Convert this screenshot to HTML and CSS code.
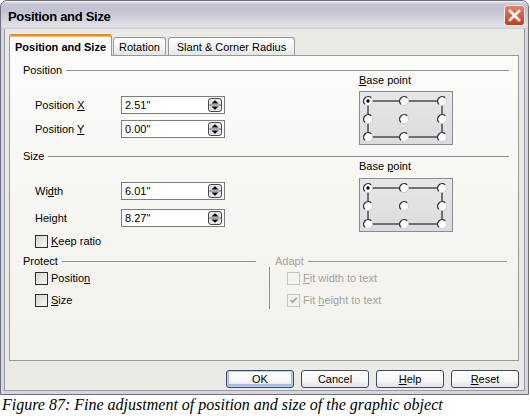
FILE: index.html
```html
<!DOCTYPE html>
<html>
<head>
<meta charset="utf-8">
<link rel="stylesheet" href="styles.css">
</head>
<body>
<svg class="defs" width="0" height="0">
  <defs>
    <g id="rb">
      <circle cx="0" cy="0" r="4.5" fill="#ffffff" stroke="#c8c8cc" stroke-width="0.8"/>
      <path d="M-3.18 3.18 A4.5 4.5 0 0 1 3.18 -3.18" fill="none" stroke="#333333" stroke-width="1.4"/>
    </g>
  </defs>
</svg>
<div class="window">
  <div class="titlebar">
    <span class="title">Position and Size</span>
    <span class="close">
      <svg width="21" height="21" viewBox="0 0 21 21">
        <defs>
          <linearGradient id="cg" x1="0" y1="0" x2="0" y2="1">
            <stop offset="0" stop-color="#e98468"/>
            <stop offset="1" stop-color="#c23a1c"/>
          </linearGradient>
        </defs>
        <rect x="0.5" y="0.5" width="20" height="20" rx="3" fill="url(#cg)" stroke="#f4f0f0"/>
        <path d="M6 6 L15 15 M15 6 L6 15" stroke="#ffffff" stroke-width="2.6" stroke-linecap="square"/>
      </svg>
    </span>
  </div>
  <div class="body">
    <div class="tabs">
      <div class="tab active">Position and Size</div>
      <div class="tab rot">Rotation</div>
      <div class="tab slant">Slant &amp; Corner Radius</div>
    </div>
    <div class="panel">
      <div class="head"><span>Position</span></div>
      <div class="sec">
        <div class="fields">
          <div class="field"><span class="lbl">Position <u>X</u></span><div class="input"><span>2.51"</span><svg class="spin" width="14" height="14" viewBox="0 0 14 14"><rect x="0.5" y="0.5" width="13" height="13" rx="2.5" fill="#e6e6ea" stroke="#4a4a4a"/><line x1="1" y1="7" x2="13" y2="7" stroke="#6a6a6a"/><path d="M7 2.3 L10.6 5.6 H3.4Z" fill="#000"/><path d="M3.4 8.4 H10.6 L7 11.7Z" fill="#000"/></svg></div></div>
          <div class="field gap6"><span class="lbl">Position <u>Y</u></span><div class="input"><span>0.00"</span><svg class="spin" width="14" height="14" viewBox="0 0 14 14"><rect x="0.5" y="0.5" width="13" height="13" rx="2.5" fill="#e6e6ea" stroke="#4a4a4a"/><line x1="1" y1="7" x2="13" y2="7" stroke="#6a6a6a"/><path d="M7 2.3 L10.6 5.6 H3.4Z" fill="#000"/><path d="M3.4 8.4 H10.6 L7 11.7Z" fill="#000"/></svg></div></div>
        </div>
        <div class="base">
          <div class="blbl"><u>B</u>ase point</div>
          <div class="bbox">
            <svg width="92" height="52" viewBox="0 0 92 52">
              <path d="M8 9 H82 V45 H8 Z" fill="none" stroke="#000" stroke-width="1"/>
              <use href="#rb" x="8" y="9"/><use href="#rb" x="44" y="9"/><use href="#rb" x="82" y="9"/>
              <use href="#rb" x="8" y="27"/><use href="#rb" x="44" y="27"/><use href="#rb" x="82" y="27"/>
              <use href="#rb" x="8" y="45"/><use href="#rb" x="44" y="45"/><use href="#rb" x="82" y="45"/>
              <circle cx="8" cy="9" r="1.7" fill="#000"/>
            </svg>
          </div>
        </div>
      </div>
      <div class="head size-head"><span>Size</span></div>
      <div class="sec">
        <div class="fields">
          <div class="field"><span class="lbl">Wi<u>d</u>th</span><div class="input"><span>6.01"</span><svg class="spin" width="14" height="14" viewBox="0 0 14 14"><rect x="0.5" y="0.5" width="13" height="13" rx="2.5" fill="#e6e6ea" stroke="#4a4a4a"/><line x1="1" y1="7" x2="13" y2="7" stroke="#6a6a6a"/><path d="M7 2.3 L10.6 5.6 H3.4Z" fill="#000"/><path d="M3.4 8.4 H10.6 L7 11.7Z" fill="#000"/></svg></div></div>
          <div class="field gap9"><span class="lbl">Hei<u>g</u>ht</span><div class="input"><span>8.27"</span><svg class="spin" width="14" height="14" viewBox="0 0 14 14"><rect x="0.5" y="0.5" width="13" height="13" rx="2.5" fill="#e6e6ea" stroke="#4a4a4a"/><line x1="1" y1="7" x2="13" y2="7" stroke="#6a6a6a"/><path d="M7 2.3 L10.6 5.6 H3.4Z" fill="#000"/><path d="M3.4 8.4 H10.6 L7 11.7Z" fill="#000"/></svg></div></div>
          <div class="check keep"><span class="cb"></span><span><u>K</u>eep ratio</span></div>
        </div>
        <div class="base">
          <div class="blbl">Base <u>p</u>oint</div>
          <div class="bbox b2">
            <svg width="92" height="52" viewBox="0 0 92 52">
              <path d="M8 9 H82 V45 H8 Z" fill="none" stroke="#000" stroke-width="1"/>
              <use href="#rb" x="8" y="9"/><use href="#rb" x="44" y="9"/><use href="#rb" x="82" y="9"/>
              <use href="#rb" x="8" y="27"/><use href="#rb" x="44" y="27"/><use href="#rb" x="82" y="27"/>
              <use href="#rb" x="8" y="45"/><use href="#rb" x="44" y="45"/><use href="#rb" x="82" y="45"/>
              <circle cx="8" cy="9" r="1.7" fill="#000"/>
            </svg>
          </div>
        </div>
      </div>
      <div class="bottom">
        <div class="col protect">
          <div class="head"><span>Protect</span></div>
          <div class="check first"><span class="cb"></span><span>Positio<u>n</u></span></div>
          <div class="check second"><span class="cb"></span><span><u>S</u>ize</span></div>
        </div>
        <div class="vsep"></div>
        <div class="col adapt">
          <div class="head dis"><span>Adapt</span></div>
          <div class="check first dis"><span class="cb"></span><span><u>F</u>it width to text</span></div>
          <div class="check second dis"><span class="cb"><svg width="11" height="11" viewBox="0 0 11 11"><path d="M2.5 5 L4.5 7.2 L8.8 2.8" fill="none" stroke="#a9a9a2" stroke-width="1.8"/></svg></span><span>Fit <u>h</u>eight to text</span></div>
        </div>
      </div>
    </div>
    <div class="buttons">
      <div class="btn default">OK</div>
      <div class="btn">Cancel</div>
      <div class="btn"><u>H</u>elp</div>
      <div class="btn"><u>R</u>eset</div>
    </div>
  </div>
</div>
<p class="caption">Figure 87: Fine adjustment of position and size of the graphic object</p>
</body>
</html>
```

FILE: styles.css
```css
html, body {
  margin: 0;
  padding: 0;
  background: #ffffff;
}

body {
  font-family: "Liberation Sans", Arial, sans-serif;
  font-size: 11px;
  color: #000;
  width: 530px;
  height: 420px;
  overflow: hidden;
}

.defs {
  position: absolute;
  width: 0;
  height: 0;
}

u {
  text-decoration: underline;
  text-underline-offset: 1px;
}

.window {
  width: 529px;
  height: 395px;
  box-sizing: border-box;
  border: 1px solid #6f6f7d;
  border-radius: 7px 7px 0 0;
  background: #ebeae4;
  box-shadow: inset 3px 0 0 #d6d6de, inset -3px 0 0 #d6d6de, inset 0 -3px 0 #d6d6de, inset 4px 0 0 #9a9aa8, inset -4px 0 0 #9a9aa8, inset 0 -4px 0 #9a9aa8;
  display: flex;
  flex-direction: column;
  overflow: hidden;
}

.titlebar {
  height: 28px;
  flex: none;
  display: flex;
  align-items: center;
  justify-content: space-between;
  padding: 0 3px 0 7px;
  background: linear-gradient(to bottom, #f4f4f8 0px, #c4c4d4 3px, #c2c2d3 9px, #d2d2de 18px, #e2e2ea 25px, #cbcbd6 28px);
  border-radius: 6px 6px 0 0;
}

.title {
  font-weight: bold;
  font-size: 13px;
  letter-spacing: -0.3px;
  padding-top: 2px;
}

.close {
  display: flex;
  margin-top: 1px;
}

.body {
  flex: 1;
  padding: 5px 9px 0 8px;
  display: flex;
  flex-direction: column;
}

.tabs {
  height: 21px;
  display: flex;
  align-items: flex-end;
  position: relative;
  z-index: 1;
}

.tab {
  box-sizing: border-box;
  height: 18px;
  line-height: 13px;
  padding-bottom: 1px;
  display: flex;
  align-items: flex-end;
  justify-content: center;
  border: 1px solid #919b9c;
  border-bottom: none;
  border-radius: 3px 3px 0 0;
  background: linear-gradient(to bottom, #ffffff, #f3f3f3 60%, #e4e4e6);
}

.tab.active {
  width: 103px;
  height: 22px;
  margin-bottom: -1px;
  padding-bottom: 2px;
  font-weight: bold;
  background: #fcfcfe;
  border-top: 2px solid #e68b2c;
  box-shadow: inset 0 1px 0 #ffc73c;
}

.tab.rot {
  width: 53px;
  margin-left: 1px;
}

.tab.slant {
  width: 127px;
  margin-left: 2px;
}

.panel {
  box-sizing: border-box;
  width: 510px;
  height: 306px;
  border: 1px solid #919b9c;
  background: linear-gradient(to bottom, #fbfbf9, #f2f1ec);
  padding: 8px 9px 0 13px;
  display: flex;
  flex-direction: column;
}

.head {
  height: 13px;
  line-height: 13px;
  display: flex;
  align-items: center;
  margin-bottom: -3px;
}

.head::after {
  content: "";
  flex: 1;
  height: 1px;
  background: #8f8f8f;
  margin-left: 4px;
  margin-top: -1px;
}

.head.dis {
  color: #a3a39c;
}

.head.dis::after {
  background: #9a9a9a;
}

.size-head {
  margin-top: 5px;
}

.sec {
  display: flex;
}

.fields {
  width: 336px;
  padding: 22px 0 0 12px;
  box-sizing: border-box;
}

.field {
  display: flex;
  align-items: center;
  height: 18px;
}

.field.gap6 {
  margin-top: 6px;
}

.field.gap9 {
  margin-top: 9px;
}

.lbl {
  width: 86px;
  line-height: 13px;
}

.input {
  box-sizing: border-box;
  width: 104px;
  height: 18px;
  border: 1px solid #7d7d7d;
  background: #ffffff;
  display: flex;
  align-items: center;
  justify-content: space-between;
  padding: 0 2px 0 3px;
  line-height: 13px;
}

.spin {
  display: block;
}

.base {
  display: flex;
  flex-direction: column;
}

.blbl {
  line-height: 13px;
  height: 13px;
}

.bbox {
  box-sizing: border-box;
  width: 94px;
  height: 54px;
  margin-top: 4px;
  border: 1px solid #8b8b8f;
  background: linear-gradient(to bottom, #e7e7ea, #dcdce0);
  display: flex;
}

.bbox.b2 {
  margin-top: 5px;
}

.bbox svg {
  display: block;
}

.check {
  display: flex;
  align-items: center;
  height: 13px;
  line-height: 13px;
}

.check.keep {
  margin-top: 8px;
}

.cb {
  box-sizing: border-box;
  width: 13px;
  height: 13px;
  margin-right: 3px;
  border: 1px solid #2e2e2e;
  background: linear-gradient(135deg, #d6d6d0, #f8f8f6);
  display: flex;
  align-items: center;
  justify-content: center;
}

.check.dis {
  color: #a3a39c;
}

.check.dis .cb {
  border-color: #c6c6c0;
  background: #f3f3f0;
}

.bottom {
  display: flex;
  margin-top: 7px;
}

.col {
  display: flex;
  flex-direction: column;
}

.protect {
  width: 233px;
}

.adapt {
  flex: 1;
  padding-right: 2px;
}

.col .head {
  margin-bottom: 0;
}

.check.first {
  margin: 4px 0 0 12px;
}

.check.second {
  margin: 9px 0 0 12px;
}

.vsep {
  width: 1px;
  height: 42px;
  margin: 12px 5px 0 13px;
  background: #8f8f8f;
}

.buttons {
  display: flex;
  justify-content: flex-end;
  gap: 7px;
  margin-top: 9px;
  width: 510px;
}

.btn {
  box-sizing: border-box;
  width: 68px;
  height: 18px;
  border: 1px solid #3d4a66;
  border-radius: 3px;
  background: linear-gradient(to bottom, #ffffff, #f6f6f6 60%, #e2e2e8);
  display: flex;
  align-items: center;
  justify-content: center;
  line-height: 13px;
}

.btn.default {
  box-shadow: inset 0 0 0 1px #bcd0ee, inset 0 -1px 0 2px #a5bde4;
}

.caption {
  margin: 1px 0 0 2px;
  font-family: "Liberation Serif", "Times New Roman", serif;
  font-style: italic;
  font-size: 16px;
  line-height: 18px;
}
```
